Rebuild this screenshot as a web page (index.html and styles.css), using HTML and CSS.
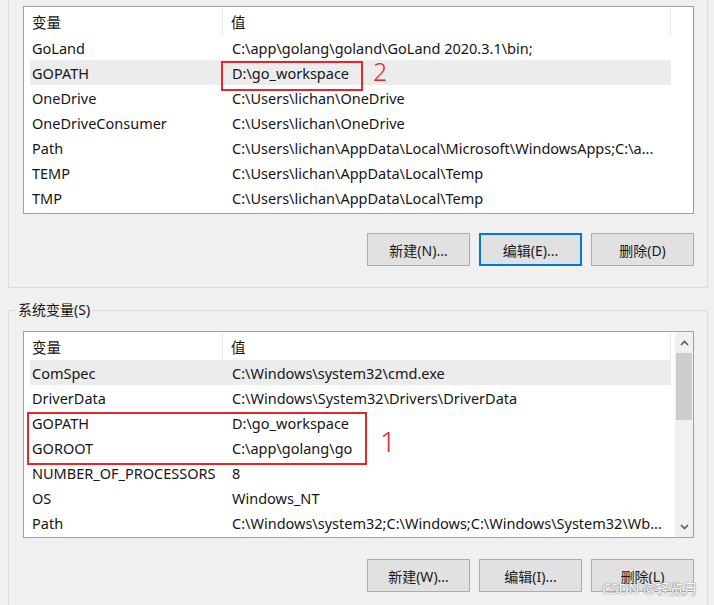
FILE: index.html
```html
<!DOCTYPE html>
<html lang="zh-CN">
<head>
<meta charset="utf-8">
<title>环境变量</title>
<link rel="stylesheet" href="styles.css">
</head>
<body>
<div class="page">
  <div class="group user-group">
    <div class="list">
      <div class="table">
        <div class="hdr"><span class="c1">变量</span><span class="c2">值</span></div>
        <div class="row"><span class="c1">GoLand</span><span class="c2">C:\app\golang\goland\GoLand 2020.3.1\bin;</span></div>
        <div class="row sel"><span class="c1">GOPATH</span><span class="c2">D:\go_workspace</span></div>
        <div class="row"><span class="c1">OneDrive</span><span class="c2">C:\Users\lichan\OneDrive</span></div>
        <div class="row"><span class="c1">OneDriveConsumer</span><span class="c2">C:\Users\lichan\OneDrive</span></div>
        <div class="row"><span class="c1">Path</span><span class="c2">C:\Users\lichan\AppData\Local\Microsoft\WindowsApps;C:\a...</span></div>
        <div class="row"><span class="c1">TEMP</span><span class="c2">C:\Users\lichan\AppData\Local\Temp</span></div>
        <div class="row"><span class="c1">TMP</span><span class="c2">C:\Users\lichan\AppData\Local\Temp</span></div>
      </div>
    </div>
    <div class="buttons">
      <button class="btn">新建(N)...</button>
      <button class="btn focus">编辑(E)...</button>
      <button class="btn">删除(D)</button>
    </div>
  </div>

  <fieldset class="group sys-group">
    <legend>系统变量(S)</legend>
    <div class="list">
      <div class="table">
        <div class="hdr"><span class="c1">变量</span><span class="c2">值</span></div>
        <div class="row sel"><span class="c1">ComSpec</span><span class="c2">C:\Windows\system32\cmd.exe</span></div>
        <div class="row"><span class="c1">DriverData</span><span class="c2">C:\Windows\System32\Drivers\DriverData</span></div>
        <div class="row"><span class="c1">GOPATH</span><span class="c2">D:\go_workspace</span></div>
        <div class="row"><span class="c1">GOROOT</span><span class="c2">C:\app\golang\go</span></div>
        <div class="row"><span class="c1">NUMBER_OF_PROCESSORS</span><span class="c2">8</span></div>
        <div class="row"><span class="c1">OS</span><span class="c2">Windows_NT</span></div>
        <div class="row"><span class="c1">Path</span><span class="c2">C:\Windows\system32;C:\Windows;C:\Windows\System32\Wb...</span></div>
      </div>
      <div class="scrollbar">
        <div class="arrow"><svg width="9" height="6" viewBox="0 0 9 6"><path d="M1 5 L4.5 1.5 L8 5" fill="none" stroke="#5a5a5a" stroke-width="1.6"/></svg></div>
        <div class="thumb"></div>
        <div class="track"></div>
        <div class="arrow"><svg width="9" height="6" viewBox="0 0 9 6"><path d="M1 1 L4.5 4.5 L8 1" fill="none" stroke="#5a5a5a" stroke-width="1.6"/></svg></div>
      </div>
    </div>
    <div class="buttons">
      <button class="btn">新建(W)...</button>
      <button class="btn">编辑(I)...</button>
      <button class="btn">删除(L)</button>
    </div>
  </fieldset>

  <div class="mark box2"></div>
  <span class="num n2">2</span>
  <div class="mark box1"></div>
  <span class="num n1">1</span>
  <div class="watermark">CSDN @轻览月</div>
</div>
</body>
</html>
```
FILE: styles.css
```css
* { box-sizing: border-box; }
html, body {
  margin: 0;
  padding: 0;
  background: #f0f0f0;
}
body {
  width: 714px;
  height: 605px;
  overflow: hidden;
  font-family: "Noto Sans", "Noto Sans CJK SC", sans-serif;
  font-size: 14.5px;
  color: #161616;
}
.page {
  position: relative;
  width: 714px;
  height: 605px;
}
.group {
  margin: 0 0 0 8px;
  width: 700px;
  border: 1px solid #dcdcdc;
}
.user-group {
  border-top: none;
  padding: 6px 13px 21px 14px;
}
.list {
  display: flex;
  width: 671px;
  height: 208px;
  background: #fff;
  border: 1px solid #a0a0a0;
  padding-left: 6px;
}
.table {
  width: 641px;
  display: flex;
  flex-direction: column;
}
.hdr, .row {
  display: flex;
  align-items: center;
}
.hdr { height: 28px; }
.row { height: 25px; line-height: 20px; }
.row.sel { background: #ececec; }
.c1 {
  width: 193px;
  padding-left: 2px;
  white-space: nowrap;
  flex: none;
}
.c2 {
  flex: 1;
  padding-left: 9px;
  white-space: nowrap;
}
.hdr .c1, .hdr .c2 {
  height: 28px;
  display: flex;
  align-items: center;
  margin-top: 1px;
}
.hdr .c1 { border-right: 1px solid #e8e8e8; }
.hdr .c2 { border-right: 1px solid #e8e8e8; padding-left: 8px; }

.buttons {
  display: flex;
  justify-content: flex-end;
  gap: 9px;
  margin-top: 19px;
}
.btn {
  width: 103px;
  height: 33px;
  background: #e1e1e1;
  border: 1px solid #adadad;
  font-family: "Noto Sans", "Noto Sans CJK SC", sans-serif;
  font-size: 14px;
  color: #1a1a1a;
  padding: 0;
}
.btn.focus { border: 2px solid #0078d7; }

.sys-group {
  margin-top: 12px;
  padding: 11px 13px 30px 14px;
  min-width: 0;
}
.sys-group legend {
  padding: 0 2px;
  margin-left: -7px;
  font-size: 14px;
  line-height: 20px;
}
.sys-group .list { height: 207px; }
.sys-group .buttons { margin-top: 21px; }
.scrollbar {
  margin-left: auto;
  width: 18px;
  background: #f0f0f0;
  display: flex;
  flex-direction: column;
}
.arrow {
  height: 21px;
  display: flex;
  align-items: center;
  justify-content: center;
}
.thumb {
  height: 67px;
  background: #cdcdcd;
  margin: 0 1px;
}
.track { flex: 1; }

.mark {
  position: absolute;
  border: 2px solid #e8262a;
}
.box2 { left: 221px; top: 61px; width: 142px; height: 30px; }
.box1 { left: 27px; top: 412px; width: 340px; height: 53px; }
.num {
  position: absolute;
  color: #e8262a;
  font-family: "Noto Sans", sans-serif;
  font-weight: 300;
}
.n2 { left: 373px; top: 62px; font-size: 25px; line-height: 18px; }
.n1 { left: 380px; top: 431px; font-size: 28px; line-height: 20px; }
.watermark {
  position: absolute;
  left: 602px;
  top: 580px;
  font-size: 14px;
  line-height: 18px;
  color: #ffffff;
  text-shadow: 0 0 1px #8a8a8a, 0 0 1px #8a8a8a, 0 0 1px #8a8a8a;
  white-space: nowrap;
}
```
